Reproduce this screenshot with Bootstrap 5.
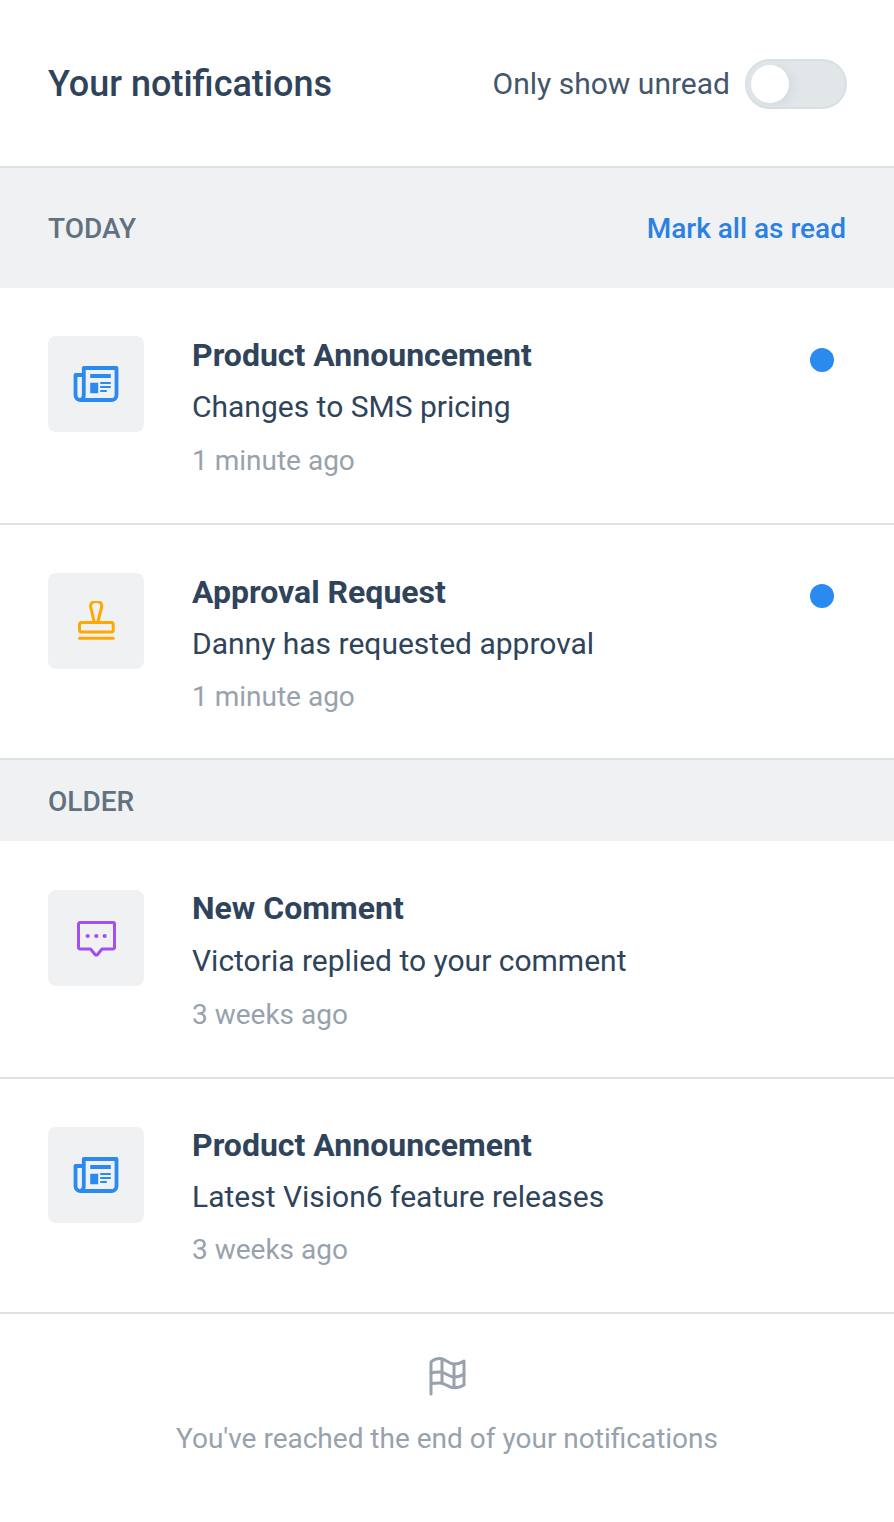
<!DOCTYPE html>
<html lang="en">
<head>
    <meta charset="UTF-8">
    <meta name="viewport" content="width=device-width, initial-scale=1.0">
    <title>Notifications</title>
    <link href="https://cdn.jsdelivr.net/npm/bootstrap@5.3.0/dist/css/bootstrap.min.css" rel="stylesheet">
    <style>
        body { font-family: Roboto, "Liberation Sans", sans-serif; color: #2f445a; background: #fff; }
        .page-head { height: 168px; padding: 0 47px 0 48px; border-bottom: 2px solid #dfe3e6; }
        .page-title { font-size: 36px; font-weight: 500; margin: 2px 0 0; color: #2f445a; line-height: 1; }
        .unread-label { font-size: 30px; color: #44566a; margin-right: -1px; }
        .toggle-track { width: 102px; height: 50px; margin-top: 2px; border-radius: 25px; background: #e1e6e9; border: 2px solid #d9e0e3; padding: 4px; }
        .toggle-knob { width: 38px; height: 38px; border-radius: 50%; background: #fff; box-shadow: 4px 2px 8px rgba(120, 135, 145, .12); }
        .group-head { padding: 0 48px; background: #f0f1f3; color: #627180; font-size: 28px; font-weight: 500; }
        .group-today { height: 120px; padding-top: 2px; }
        .group-older { height: 81px; padding-top: 2px; }
        .mark-read { color: #2a80e3; font-size: 28px; font-weight: 500; text-decoration: none; }
        .notif-row { padding: 48px 48px 0; border-bottom: 2px solid #dfe3e6; gap: 48px; }
        .row-a { height: 237px; }
        .row-b { height: 235px; }
        .row-c { height: 238px; padding-top: 49px; }
        .icon-tile { width: 96px; height: 96px; border-radius: 8px; background: #f0f1f3; flex: none; }
        .notif-body { margin-top: -1px; }
        .row-c .notif-body { margin-top: -2px; }
        .row-d .notif-body { margin-top: -2px; }
        .notif-title { font-size: 32px; font-weight: 700; line-height: 40px; color: #2f445a; margin: 0; }
        .notif-text { font-size: 30px; line-height: 40px; margin-top: 12px; color: #2f445a; }
        .notif-time { font-size: 28px; line-height: 40px; margin-top: 14px; color: #98a2ad; }
        .row-b .notif-time { margin-top: 13px; }
        .row-c .notif-text { margin-top: 13px; }
        .dot-unread { width: 24px; height: 24px; border-radius: 50%; background: #2a8af0; right: 60px; top: 60px; }
        .row-b .dot-unread { top: 59px; }
        .end-note { padding-top: 43px; color: #98a2ad; font-size: 28px; gap: 22px; }
    </style>
</head>
<body>
<div class="page-head d-flex align-items-center justify-content-between">
    <h1 class="page-title">Your notifications</h1>
    <div class="d-flex align-items-center gap-3">
        <span class="unread-label">Only show unread</span>
        <div class="toggle-track"><div class="toggle-knob"></div></div>
    </div>
</div>

<div class="group-head group-today d-flex align-items-center justify-content-between">
    <span>TODAY</span>
    <a class="mark-read" href="#">Mark all as read</a>
</div>

<div class="notif-row row-a d-flex position-relative">
    <div class="icon-tile d-flex align-items-center justify-content-center">
        <svg width="46" height="36" viewBox="-0.500 0 46 36" fill="none"><path d="M10.300 9H2v20a5 5 0 0 0 5 5h31a5 5 0 0 0 5-5V2H10.300v27a5 5 0 0 1-3.300 5" stroke="#2a8af0" stroke-width="3.800" stroke-linejoin="round"/><path d="M16.700 8h20.600v4H16.700zM16.700 16.700h8v10.600h-8zM26.700 16h10.600v2H26.700zM26.700 20h10.600v2H26.700zM26.700 24h6.600v2h-6.600z" fill="#2a8af0"/></svg>
    </div>
    <div class="notif-body">
        <p class="notif-title">Product Announcement</p>
        <div class="notif-text">Changes to SMS pricing</div>
        <div class="notif-time">1 minute ago</div>
    </div>
    <span class="dot-unread position-absolute"></span>
</div>

<div class="notif-row row-b d-flex position-relative">
    <div class="icon-tile d-flex align-items-center justify-content-center">
        <svg width="37" height="40" viewBox="0 1 37 40" fill="none" stroke="#ffa800" stroke-width="3" stroke-linecap="round" stroke-linejoin="round"><path d="M16 21L12.700 7a4.500 4.500 0 0 1 4.300-5.500h2.400a4.500 4.500 0 0 1 4.300 5.500L20 21"/><rect x="1.500" y="22.500" width="33.700" height="9.500" rx="2"/><path d="M1.500 38.300h33.700"/></svg>
    </div>
    <div class="notif-body">
        <p class="notif-title">Approval Request</p>
        <div class="notif-text">Danny has requested approval</div>
        <div class="notif-time">1 minute ago</div>
    </div>
    <span class="dot-unread position-absolute"></span>
</div>

<div class="group-head group-older d-flex align-items-center">
    <span>OLDER</span>
</div>

<div class="notif-row row-c d-flex">
    <div class="icon-tile d-flex align-items-center justify-content-center">
        <svg width="39" height="37" viewBox="0 -1 39 37" fill="none"><path d="M3 1.500h33a1.500 1.500 0 0 1 1.500 1.500v23.500a1.500 1.500 0 0 1-1.500 1.500H25l-4.500 5.500a1.500 1.500 0 0 1-2.400 0L13.500 28H3a1.500 1.500 0 0 1-1.500-1.500V3A1.500 1.500 0 0 1 3 1.500z" stroke="#a050f0" stroke-width="3" stroke-linejoin="round"/><circle cx="10.700" cy="15" r="2.100" fill="#a050f0"/><circle cx="19.300" cy="15" r="2.100" fill="#a050f0"/><circle cx="27.700" cy="15" r="2.100" fill="#a050f0"/></svg>
    </div>
    <div class="notif-body">
        <p class="notif-title">New Comment</p>
        <div class="notif-text">Victoria replied to your comment</div>
        <div class="notif-time">3 weeks ago</div>
    </div>
</div>

<div class="notif-row row-b row-d d-flex">
    <div class="icon-tile d-flex align-items-center justify-content-center">
        <svg width="46" height="36" viewBox="-0.500 0 46 36" fill="none"><path d="M10.300 9H2v20a5 5 0 0 0 5 5h31a5 5 0 0 0 5-5V2H10.300v27a5 5 0 0 1-3.300 5" stroke="#2a8af0" stroke-width="3.800" stroke-linejoin="round"/><path d="M16.700 8h20.600v4H16.700zM16.700 16.700h8v10.600h-8zM26.700 16h10.600v2H26.700zM26.700 20h10.600v2H26.700zM26.700 24h6.600v2h-6.600z" fill="#2a8af0"/></svg>
    </div>
    <div class="notif-body">
        <p class="notif-title">Product Announcement</p>
        <div class="notif-text">Latest Vision6 feature releases</div>
        <div class="notif-time">3 weeks ago</div>
    </div>
</div>

<div class="end-note d-flex flex-column align-items-center">
    <svg width="37" height="39" viewBox="0 0 37 39" fill="none" stroke="#98a2ad" stroke-width="3" stroke-linejoin="round" stroke-linecap="round"><path d="M2 37V5c3-3 6-3.500 9-3.500 5 0 9 5.500 14 5.500 3.500 0 7-1 10-3v24c-3 2-6.500 2.800-10 2.800-5 0-9-4.800-14-4.800-3 0-6 .2-9 .5"/><path d="M2 16c3-1 6-1 9-1 5 0 9 5 14 5 3.500 0 7-1 10-3"/><path d="M13 2v24M25 7v23"/></svg>
    <div>You've reached the end of your notifications</div>
</div>

<script src="https://cdn.jsdelivr.net/npm/bootstrap@5.3.0/dist/js/bootstrap.bundle.min.js"></script>
</body>
</html>
